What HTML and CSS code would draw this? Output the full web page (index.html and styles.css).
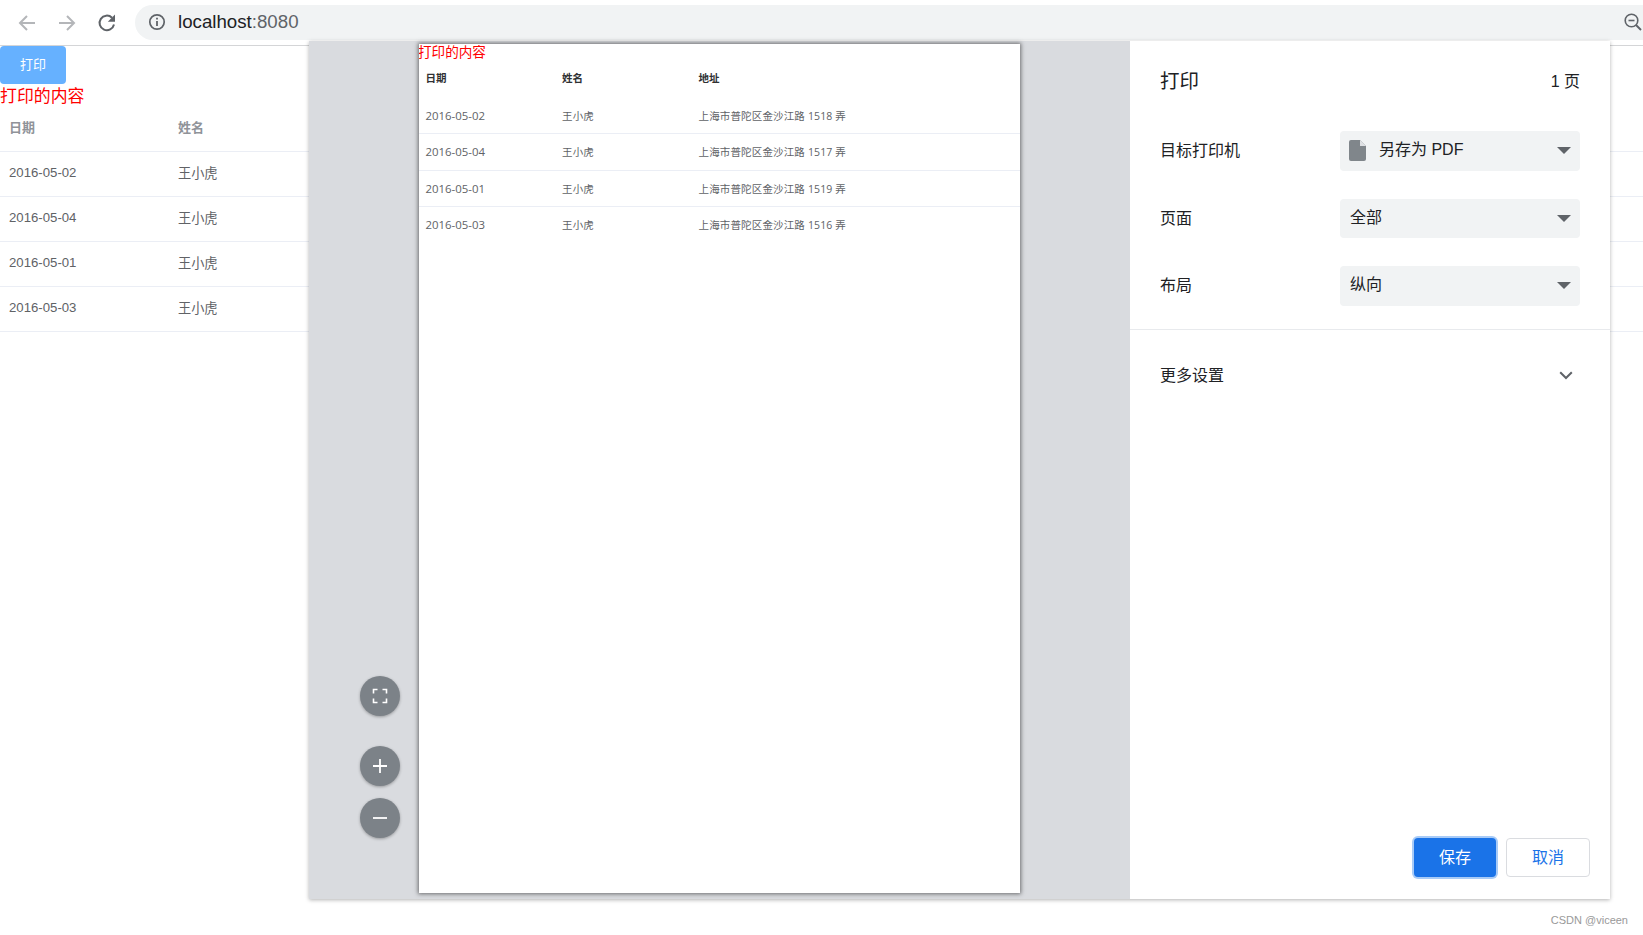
FILE: index.html
```html
<!DOCTYPE html>
<html lang="en">
<head>
    <meta charset="UTF-8">
    <title>localhost:8080</title>
    <link rel="stylesheet" href="styles.css">
</head>
<body>

    <div class="toolbar">
        <svg class="navIcon" width="24" height="24" viewBox="0 0 24 24"><path d="M20 12H5M12 5l-7 7 7 7" fill="none" stroke="#b4b6b9" stroke-width="2"/></svg>
        <svg class="navIcon" width="24" height="24" viewBox="0 0 24 24"><path d="M4 12h15M12 5l7 7-7 7" fill="none" stroke="#b4b6b9" stroke-width="2"/></svg>
        <svg class="navIcon" width="24" height="24" viewBox="0 0 24 24"><path d="M19 13.5A7.3 7.3 0 1 1 17 6.7" fill="none" stroke="#5f6368" stroke-width="2"/><path d="M20 3.5v7.2h-7.2z" fill="#5f6368"/></svg>
        <div class="urlBar">
            <svg width="18" height="18" viewBox="0 0 18 18"><circle cx="9" cy="9" r="7.2" fill="none" stroke="#5f6368" stroke-width="1.7"/><path d="M9 8v5M9 4.8v1.8" stroke="#5f6368" stroke-width="1.8"/></svg>
            <span class="urlText">localhost<span class="urlPort">:8080</span></span>
            <svg class="urlZoom" width="20" height="20" viewBox="0 0 20 20"><circle cx="8.5" cy="8.5" r="6.3" fill="none" stroke="#5f6368" stroke-width="1.6"/><path d="M5.5 8.5h6" stroke="#5f6368" stroke-width="1.6"/><path d="M13 13l5 5" stroke="#5f6368" stroke-width="2"/></svg>
        </div>
    </div>

    <div class="page">
        <button class="printBtn">打印</button>
        <div class="printTitle">打印的内容</div>
        <table class="dataTable">
            <tr><th>日期</th><th>姓名</th></tr>
            <tr><td>2016-05-02</td><td>王小虎</td></tr>
            <tr><td>2016-05-04</td><td>王小虎</td></tr>
            <tr><td>2016-05-01</td><td>王小虎</td></tr>
            <tr><td>2016-05-03</td><td>王小虎</td></tr>
        </table>
    </div>

    <div class="printDialog">
        <div class="preview">
            <div class="sheet">
                <div class="sheetTitle">打印的内容</div>
                <table class="sheetTable">
                    <tr><th>日期</th><th>姓名</th><th>地址</th></tr>
                    <tr><td class="dateCell">2016-05-02</td><td>王小虎</td><td>上海市普陀区金沙江路 1518 弄</td></tr>
                    <tr><td class="dateCell">2016-05-04</td><td>王小虎</td><td>上海市普陀区金沙江路 1517 弄</td></tr>
                    <tr><td class="dateCell">2016-05-01</td><td>王小虎</td><td>上海市普陀区金沙江路 1519 弄</td></tr>
                    <tr><td class="dateCell">2016-05-03</td><td>王小虎</td><td>上海市普陀区金沙江路 1516 弄</td></tr>
                </table>
            </div>
            <div class="zoomBtns">
                <div class="zoomBtn fitBtn">
                    <svg width="18" height="18" viewBox="0 0 18 18"><path d="M2.500 6.500V2.500h4M11.500 2.500h4v4M15.500 11.500v4h-4M6.500 15.500h-4v-4" fill="none" stroke="#fff" stroke-width="1.600"/></svg>
                </div>
                <div class="zoomBtn plusBtn">
                    <svg width="18" height="18" viewBox="0 0 18 18"><path d="M9 2v14M2 9h14" stroke="#fff" stroke-width="1.800"/></svg>
                </div>
                <div class="zoomBtn">
                    <svg width="18" height="18" viewBox="0 0 18 18"><path d="M2 9h14" stroke="#fff" stroke-width="1.800"/></svg>
                </div>
            </div>
        </div>

        <div class="sidebar">
            <div class="sideHead">
                <span class="sideTitle">打印</span>
                <span class="pageCount">1 页</span>
            </div>
            <div class="settings">
                <div class="settingRow">
                    <span class="settingLabel">目标打印机</span>
                    <div class="selectBox">
                        <svg class="docIcon" width="17" height="21" viewBox="0 0 17 21"><path d="M2 0h9l6 6v13a2 2 0 0 1-2 2H2a2 2 0 0 1-2-2V2a2 2 0 0 1 2-2z" fill="#80868b"/><path d="M11 0v6h6z" fill="#dfe1e4"/></svg>
                        <span class="selectText">另存为 PDF</span>
                        <i class="caret"></i>
                    </div>
                </div>
                <div class="settingRow">
                    <span class="settingLabel">页面</span>
                    <div class="selectBox">
                        <span class="selectText">全部</span>
                        <i class="caret"></i>
                    </div>
                </div>
                <div class="settingRow">
                    <span class="settingLabel">布局</span>
                    <div class="selectBox">
                        <span class="selectText">纵向</span>
                        <i class="caret"></i>
                    </div>
                </div>
            </div>
            <div class="moreRow">
                <span class="settingLabel">更多设置</span>
                <svg width="14" height="9" viewBox="0 0 14 9"><path d="M1.200 1.200L7 7l5.800-5.800" fill="none" stroke="#5f6368" stroke-width="2"/></svg>
            </div>
            <div class="sideFoot">
                <button class="saveBtn">保存</button>
                <button class="cancelBtn">取消</button>
            </div>
        </div>
    </div>

    <div class="watermark">CSDN @viceen</div>

</body>
</html>
```

FILE: styles.css
```css
body {
    margin: 0;
    height: 935px;
    overflow: hidden;
    position: relative;
    background: #fff;
    font-family: "Liberation Sans", "Noto Sans CJK SC", sans-serif;
    color: #606266;
}
.toolbar {
    height: 45px;
    border-bottom: 1px solid #d4d5d7;
    display: flex;
    align-items: center;
    padding-left: 15px;
}
.navIcon {
    margin-right: 16px;
    flex: none;
}
.urlBar {
    flex: 1;
    height: 35px;
    margin-top: -1px;
    background: #f1f3f4;
    border-radius: 18px 0 0 18px;
    display: flex;
    align-items: center;
    padding-left: 13px;
}
.urlText {
    margin-left: 12px;
    font-size: 18.700px;
    color: #202124;
}
.urlPort {
    color: #5f6368;
}
.urlZoom {
    margin-left: auto;
}

.printBtn {
    display: block;
    width: 66px;
    height: 38px;
    padding: 0 0 4px;
    border: none;
    border-radius: 4px;
    background: #66b1ff;
    color: #fff;
    font-family: inherit;
    font-size: 13px;
}
.printTitle {
    font-size: 16.900px;
    line-height: 24px;
    padding-top: 1px;
    margin-bottom: -1px;
    color: #f00;
}
.dataTable {
    width: 100%;
    table-layout: fixed;
    border-collapse: collapse;
    font-size: 13.200px;
}
.dataTable th:first-child {
    width: 169px;
}
.dataTable th {
    box-sizing: border-box;
    height: 43px;
    padding: 0 9px 5px;
    text-align: left;
    font-size: 13px;
    color: #909399;
    border-bottom: 1px solid #ebeef5;
}
.dataTable td {
    box-sizing: border-box;
    height: 45px;
    padding: 0 9px 2px;
    border-bottom: 1px solid #ebeef5;
}

.printDialog {
    position: absolute;
    top: 41px;
    left: 309px;
    width: 1301px;
    height: 858px;
    display: flex;
    box-shadow: 0 1px 4px rgba(0, 0, 0, 0.3);
}
.preview {
    position: relative;
    width: 821px;
    background: #d9dbdf;
}
.sheet {
    width: 601px;
    height: 849px;
    margin: 3px 0 0 110px;
    background: #fff;
    box-shadow: 0 0 4px 1px rgba(0, 0, 0, 0.5);
    overflow: hidden;
}
.sheetTitle {
    font-size: 13.600px;
    line-height: 16px;
    padding-top: 1px;
    margin-bottom: -1px;
    margin-left: -1px;
    color: #f00;
}
.sheetTable {
    width: 100%;
    table-layout: fixed;
    border-collapse: collapse;
    font-family: "Open Sans", "Noto Sans CJK SC", sans-serif;
    font-size: 10.500px;
}
.sheetTable th:first-child,
.sheetTable th:nth-child(2) {
    box-sizing: border-box;
    width: 136.500px;
}
.sheetTable th {
    height: 35px;
    padding: 0 6.500px 3px;
    text-align: left;
    color: #303133;
}
.sheetTable td {
    height: 35.300px;
    padding: 0 6.500px;
    border-bottom: 1px solid #ebeef5;
    letter-spacing: 0.150px;
}
.sheetTable .dateCell {
    font-size: 11.400px;
    letter-spacing: 0;
}
.sheetTable tr:last-child td {
    border-bottom: none;
}
.zoomBtns {
    position: absolute;
    left: 51px;
    top: 635px;
    display: flex;
    flex-direction: column;
    gap: 12px;
}
.zoomBtn {
    width: 40px;
    height: 40px;
    border-radius: 50%;
    background: #7c8288;
    box-shadow: 0 1px 3px rgba(0, 0, 0, 0.3);
    display: flex;
    align-items: center;
    justify-content: center;
}
.fitBtn {
    margin-bottom: 18px;
}

.sidebar {
    flex: 1;
    background: #fff;
    display: flex;
    flex-direction: column;
    font-size: 16px;
    color: #202124;
}
.sideHead {
    height: 80px;
    box-sizing: border-box;
    padding: 0 30px 3px;
    display: flex;
    align-items: center;
    justify-content: space-between;
}
.sideTitle {
    font-size: 19.500px;
}
.settings {
    padding: 10px 30px 23px;
    display: flex;
    flex-direction: column;
    gap: 28px;
    border-bottom: 1px solid #e8eaed;
}
.settingRow {
    display: flex;
    align-items: center;
    justify-content: space-between;
}
.settingLabel {
    padding-bottom: 3px;
}
.selectBox {
    width: 240px;
    height: 39.500px;
    box-sizing: border-box;
    padding: 0 9px 0 10px;
    background: #f1f3f4;
    border-radius: 4px;
    display: flex;
    align-items: center;
}
.selectText {
    padding-bottom: 5px;
}
.docIcon {
    margin: 0 13px 0 -1px;
}
.caret {
    margin-left: auto;
    border-top: 7px solid #5f6368;
    border-left: 7px solid transparent;
    border-right: 7px solid transparent;
}
.moreRow {
    height: 92px;
    padding: 0 37px 0 30px;
    display: flex;
    align-items: center;
    justify-content: space-between;
}
.sideFoot {
    margin-top: auto;
    padding: 0 20px 22px 0;
    display: flex;
    justify-content: flex-end;
    align-items: center;
    gap: 10px;
}
.saveBtn,
.cancelBtn {
    width: 84px;
    height: 39px;
    padding: 0 0 3px;
    border-radius: 4px;
    font-family: inherit;
    font-size: 16px;
}
.saveBtn {
    width: 82px;
    border: none;
    background: #1a73e8;
    color: #fff;
    box-shadow: 0 0 0 2px #a8cbf7;
}
.cancelBtn {
    border: 1px solid #dadce0;
    background: #fff;
    color: #1a73e8;
}

.watermark {
    position: absolute;
    right: 15px;
    bottom: 9px;
    font-size: 11px;
    color: #999;
}
```
